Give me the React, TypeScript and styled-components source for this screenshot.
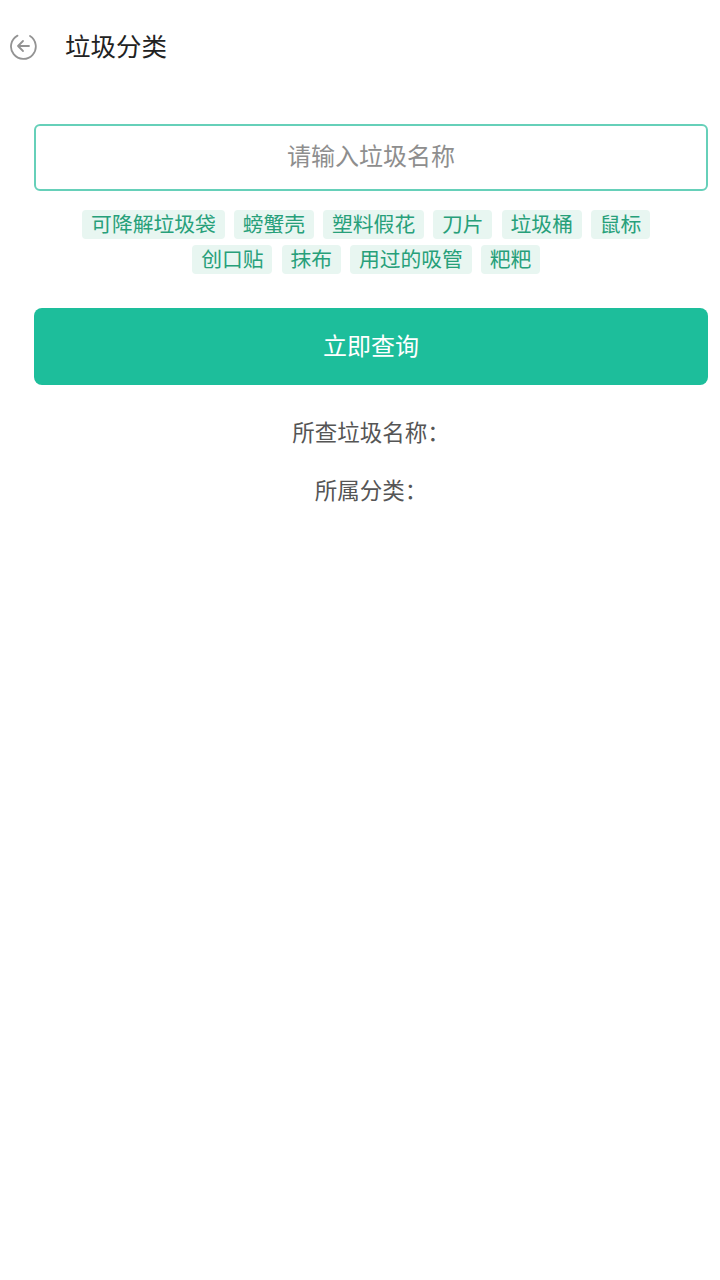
import React from 'react';
import styled, { createGlobalStyle } from 'styled-components';

const GlobalStyle = createGlobalStyle`
  html, body {
    margin: 0;
    padding: 0;
    background: #fff;
    font-family: "Noto Sans CJK SC", "Noto Sans", sans-serif;
  }
`;

const hotWords = ['可降解垃圾袋', '螃蟹壳', '塑料假花', '刀片', '垃圾桶', '鼠标', '创口贴', '抹布', '用过的吸管', '粑粑'];

const Page = styled.div`
  width: 720px;
  height: 1280px;
  background: #fff;
  overflow: hidden;
`;

const Header = styled.div`
  display: flex;
  align-items: center;
  height: 48px;
  padding: 22px 0 0 10px;
`;

const BackIcon = styled.svg`
  width: 28px;
  height: 28px;
  flex: none;
`;

const Title = styled.div`
  margin-left: 27px;
  padding-bottom: 2px;
  font-size: 25.5px;
  line-height: 46px;
  color: #222;
`;

const Content = styled.div`
  display: flex;
  flex-direction: column;
  padding: 54px 12px 0 34px;
`;

const SearchBox = styled.div`
  height: 67px;
  box-sizing: border-box;
  padding-bottom: 6px;
  border: 2px solid #66d0b9;
  border-radius: 6px;
  display: flex;
  align-items: center;
  justify-content: center;
  font-size: 24px;
  color: #8e8e8e;
`;

const Tags = styled.div`
  display: flex;
  flex-wrap: wrap;
  justify-content: center;
  row-gap: 6px;
  margin-top: 19px;
  padding: 0 30px;
`;

const Tag = styled.span`
  height: 29px;
  margin-right: 9.5px;
  padding: 0 8.7px;
  border-radius: 4px;
  background: #e8f6f1;
  color: #27a07a;
  font-size: 20.8px;
  line-height: 27px;
`;

const QueryButton = styled.div`
  height: 77px;
  box-sizing: border-box;
  padding-bottom: 5px;
  margin-top: 34px;
  border-radius: 8px;
  background: #1dbe9b;
  color: #fff;
  font-size: 24px;
  display: flex;
  align-items: center;
  justify-content: center;
`;

const ResultLine = styled.div<{ $top: number }>`
  margin-top: ${p => p.$top}px;
  height: 34px;
  line-height: 34px;
  text-align: center;
  font-size: 22.5px;
  color: #555;
`;

export default function App() {
  return (
    <Page>
      <GlobalStyle />
      <Header>
        <BackIcon viewBox="0 0 28 28" fill="none" stroke="#939393" strokeWidth="1.8" strokeLinecap="round" strokeLinejoin="round">
          <path d="M20 4A12.4 12.4 0 1 1 7.5 3.6" />
          <path d="M19 14H8M13 9L8 14l5 5" />
        </BackIcon>
        <Title>垃圾分类</Title>
      </Header>
      <Content>
        <SearchBox>请输入垃圾名称</SearchBox>
        <Tags>
          {hotWords.map(word => (
            <Tag key={word}>{word}</Tag>
          ))}
        </Tags>
        <QueryButton>立即查询</QueryButton>
        <ResultLine $top={29}>所查垃圾名称：</ResultLine>
        <ResultLine $top={24}>所属分类：</ResultLine>
      </Content>
    </Page>
  );
}
